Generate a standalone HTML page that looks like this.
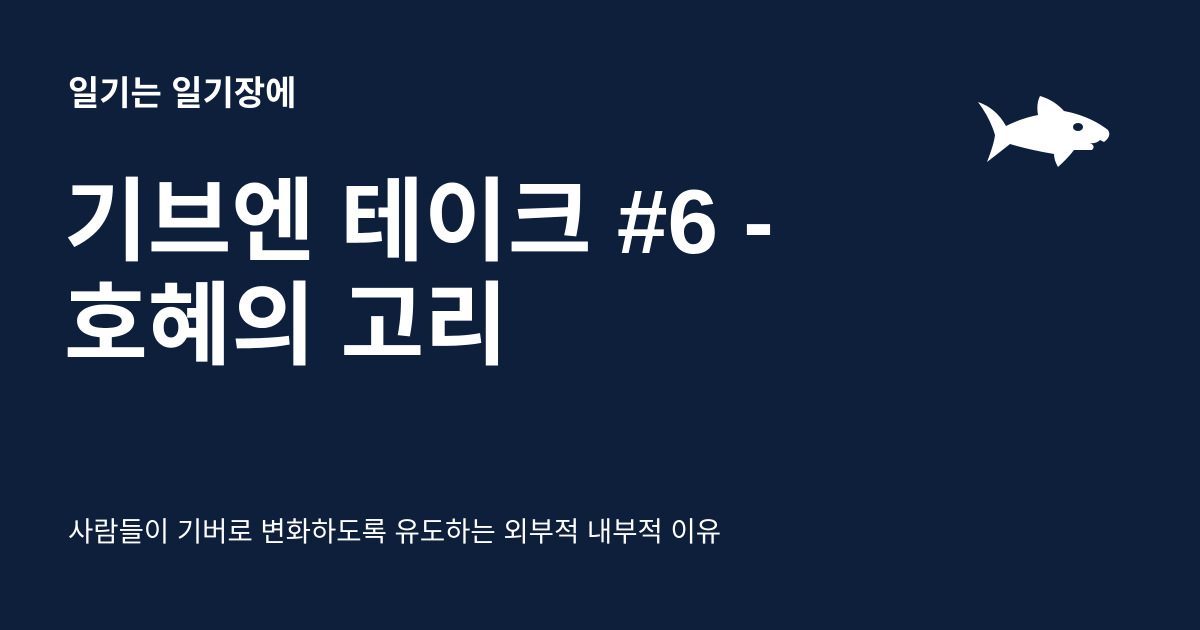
<!DOCTYPE html>
<html><head><meta charset="utf-8"><style>
body{margin:0;width:1200px;height:630px;background:#0e1f3b;overflow:hidden;font-family:"Liberation Sans","Noto Sans CJK KR",sans-serif;color:#fff;position:relative}
.a{position:absolute;left:68px;top:74px;font-size:34px;font-weight:700;line-height:40px}
.t{position:absolute;left:64px;top:171px;font-size:91px;font-weight:700;line-height:104px}
.s{position:absolute;left:68px;top:514px;font-size:27.5px;line-height:36px}
svg{position:absolute;left:0;top:0}
</style></head><body>
<div class="a">일기는 일기장에</div>
<div class="t">기브엔 테이크 #6 -<br>호혜의 고리</div>
<div class="s">사람들이 기버로 변화하도록 유도하는 외부적 내부적 이유</div>
<svg width="1200" height="630"><path fill="#fff" d="M978 102 Q996 108 1006 126 Q1022 118 1038 115 Q1036 104 1040 96 Q1054 100 1064 111 Q1090 116 1108 130 Q1112 136 1104 142 L1100 140 Q1096 144 1090 143 Q1096 146 1092 150 Q1084 150 1074 150 Q1068 158 1058 167 Q1054 160 1054 154 Q1030 150 1010 144 Q1000 152 987 162 Q994 144 995 135 Q990 118 978 102Z"/><ellipse cx="1078" cy="127" rx="5" ry="4" fill="#0e1f3b"/></svg>
</body></html>
